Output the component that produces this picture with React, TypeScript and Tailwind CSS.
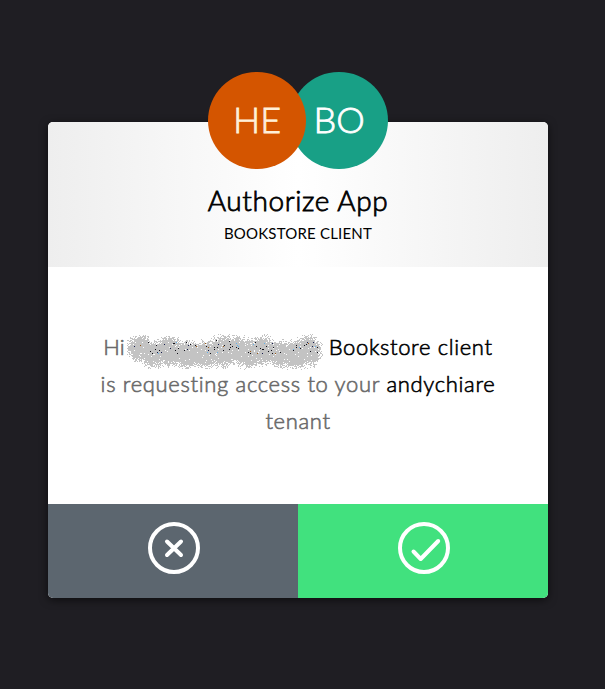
const BLOBS: [number, number, number, number][] = [
  [13, 14, 11, 11], [27, 20, 12, 11], [42, 17, 13, 12], [60, 20, 13, 11],
  [78, 20, 13, 11], [96, 17, 14, 13], [110, 15, 12, 11], [120, 19, 14, 12],
  [135, 16, 13, 12], [152, 19, 12, 11], [168, 20, 14, 12], [180, 17, 12, 13],
];
const INKS = ['#101018', '#141b4d', '#9a5a16', '#62b4ee', '#101018', '#101018'];

function makeSpray() {
  let seed = 4711;
  const random = () => {
    seed = (seed * 16807) % 2147483647;
    return seed / 2147483647;
  };
  let grey = '';
  const flecks = INKS.map(() => '');
  for (let y = 0; y < 36; y++) {
    for (let x = 0; x < 196; x++) {
      let d = 9;
      for (const [cx, cy, rx, ry] of BLOBS) {
        d = Math.min(d, Math.hypot((x - cx) / rx, (y - cy) / ry));
      }
      const density = d > 1.42 ? 0 : Math.min(0.96, (1.42 - d) * 1.6);
      const pick = random();
      if (pick > density) continue;
      if (y > 5 && y < 20 && d < 1.1 && random() < 0.045) {
        flecks[Math.floor(random() * INKS.length)] += `M${x} ${y}h1v1h-1z`;
      } else {
        grey += `M${x} ${y}h1v1h-1z`;
      }
    }
  }
  return { grey, flecks };
}

const spray = makeSpray();

function RedactedName() {
  return (
    <span className="relative inline-block h-4 w-[204px]">
      <svg className="absolute top-[-5px] left-[2px]" width="196" height="36" shapeRendering="crispEdges" aria-hidden="true">
        <path d={spray.grey} fill="#c3c3c3" />
        {spray.flecks.map((d, i) => (
          <path key={i} d={d} fill={INKS[i]} />
        ))}
      </svg>
    </span>
  );
}

export default function App() {
  return (
    <main className="flex h-[689px] w-[605px] items-start bg-[#1f1e23] pt-[122px] pl-12 font-['Lato',sans-serif]">
      <section className="flex h-[476px] w-[500px] flex-col rounded-[5px] bg-white shadow-[0_2px_8px_rgba(0,0,0,0.6)]">
        <header className="flex h-[145px] flex-col items-center rounded-t-[5px] bg-[linear-gradient(90deg,#eeeeee,#ffffff_50%,#eeeeee)]">
          <div className="-mt-[50px] flex h-[97px] w-[180px] shrink-0 text-[36px] leading-[95px] font-light [-webkit-text-stroke-width:0.8px]">
            <div className="relative z-10 h-[97px] w-[98px] shrink-0 rounded-full bg-[#d45500] text-center text-[#fff0d8]">HE</div>
            <div className="-ml-4 h-[97px] w-[98px] shrink-0 rounded-full bg-[#18a086] text-center text-white">BO</div>
          </div>
          <h1 className="mt-[13px] text-[28px] leading-9 font-light tracking-[0.6px] whitespace-nowrap text-black [-webkit-text-stroke-width:0.8px]">Authorize App</h1>
          <p className="mt-[5px] text-[15px] leading-5 tracking-[0.2px] whitespace-nowrap text-black">BOOKSTORE CLIENT</p>
        </header>
        <div className="flex flex-1 flex-col items-center pt-[61px] text-[22px] leading-[37px] font-light text-[#6a6a6a] [-webkit-text-stroke-width:0.6px]">
          <p className="flex items-center whitespace-nowrap">
            <span>Hi</span>
            <RedactedName />
            <span className="tracking-[0.65px] text-black">Bookstore client</span>
          </p>
          <p className="tracking-[0.67px] whitespace-nowrap">
            is requesting access to your <span className="text-black">andychiare</span>
          </p>
          <p className="tracking-[0.67px]">tenant</p>
        </div>
        <footer className="flex h-[94px] overflow-hidden rounded-b-[5px]">
          <button aria-label="Decline" className="flex flex-1 justify-center bg-[#5c666f] pt-[18px] pl-[2px]">
            <svg width="52" height="52" fill="none" stroke="white" strokeWidth="4" strokeLinecap="round">
              <circle cx="26" cy="26" r="24" />
              <path d="M19 19.5 33 33M33 19.5 19 33" />
            </svg>
          </button>
          <button aria-label="Authorize" className="flex flex-1 justify-center bg-[#41e17e] pt-[18px] pl-[2px]">
            <svg width="52" height="52" fill="none" stroke="white" strokeWidth="4" strokeLinecap="round" strokeLinejoin="round">
              <circle cx="26" cy="26" r="24" />
              <path d="M15.5 29.5 22.7 37 40.2 19" />
            </svg>
          </button>
        </footer>
      </section>
    </main>
  );
}
